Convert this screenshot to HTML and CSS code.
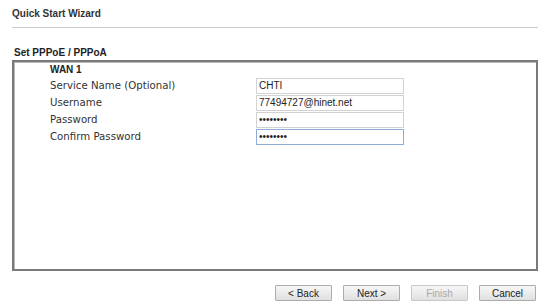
FILE: index.html
```html
<!DOCTYPE html>
<html lang="en">

<head>
  <meta charset="UTF-8">
  <meta name="viewport" content="width=device-width, initial-scale=1.0">
  <title>Quick Start Wizard</title>

  <link rel="stylesheet" href="styles.css">
</head>

<body>
  <!-- Page heading with the underline -->
  <div class="wizard-title">Quick Start Wizard</div>

  <!-- Section heading -->
  <div class="section-title">Set PPPoE / PPPoA</div>

  <!-- The framed block with the WAN settings -->
  <div class="panel">
    <div class="wan-name">WAN 1</div>

    <div class="form-row">
      <label for="service">Service Name (Optional)</label>
      <input type="text" id="service" value="CHTI">
    </div>

    <div class="form-row">
      <label for="username">Username</label>
      <input type="text" id="username" value="77494727@hinet.net">
    </div>

    <div class="form-row">
      <label for="password">Password</label>
      <input type="password" id="password" value="12345678">
    </div>

    <div class="form-row">
      <label for="confirm">Confirm Password</label>
      <input type="password" id="confirm" class="active-input" value="12345678">
    </div>
  </div>

  <!-- Wizard navigation buttons -->
  <div class="button-row">
    <button type="button">&lt; Back</button>
    <button type="button">Next &gt;</button>
    <button type="button" disabled>Finish</button>
    <button type="button">Cancel</button>
  </div>
</body>

</html>
```

FILE: styles.css
```css
/* Default margins removed, white page */
body {
  margin: 0;
  padding: 0;
  background-color: #ffffff;
  font-family: "Liberation Sans", Arial, sans-serif;
  color: #222222;
}

/* Heading on top with a thin gray line under it */
.wizard-title {
  margin: 0 12px;
  height: 27px;
  line-height: 28px;
  border-bottom: 1px solid #cccccc;
  font-size: 10px;
  font-weight: bold;
  color: #333333;
}

/* "Set PPPoE / PPPoA" heading right above the panel */
.section-title {
  margin: 17px 0 0 14px;
  height: 15px;
  line-height: 15px;
  font-size: 10px;
  font-weight: bold;
  color: #222222;
}

/* The framed block */
.panel {
  margin: 0 12px;
  height: 207px;
  border: 2px solid #7a7a7a;
  box-shadow: inset 1px 1px 0 #b8b8b8;
  padding-left: 36px;
}

.wan-name {
  height: 15px;
  line-height: 15px;
  font-size: 10px;
  font-weight: bold;
  color: #222222;
}

/* Label column and input column */
.form-row {
  display: grid;
  grid-template-columns: 206px 148px;
  align-items: center;
  height: 17px;
}

.form-row label {
  font-family: "DejaVu Sans", Verdana, sans-serif;
  font-size: 10.2px;
  color: #333333;
}

.form-row input {
  box-sizing: border-box;
  width: 148px;
  height: 16px;
  margin: 0;
  padding: 0 2px;
  border: 1px solid #d2d2d2;
  font-family: "Liberation Sans", Arial, sans-serif;
  font-size: 10px;
  color: #222222;
  outline: none;
}

/* The last field has the focus ring */
.active-input {
  border-color: #8fadd9 !important;
}

/* Buttons at the bottom right */
.button-row {
  display: flex;
  justify-content: flex-end;
  gap: 11px;
  margin: 14px 14px 0 0;
}

.button-row button {
  width: 57px;
  height: 16px;
  padding: 0;
  border: 1px solid #acacac;
  border-radius: 1px;
  background: linear-gradient(#f7f7f7, #e0e0e0);
  font-family: "Liberation Sans", Arial, sans-serif;
  font-size: 10px;
  color: #222222;
}

.button-row button:disabled {
  color: #a8a8a8;
  border-color: #c8c8c8;
}
```
